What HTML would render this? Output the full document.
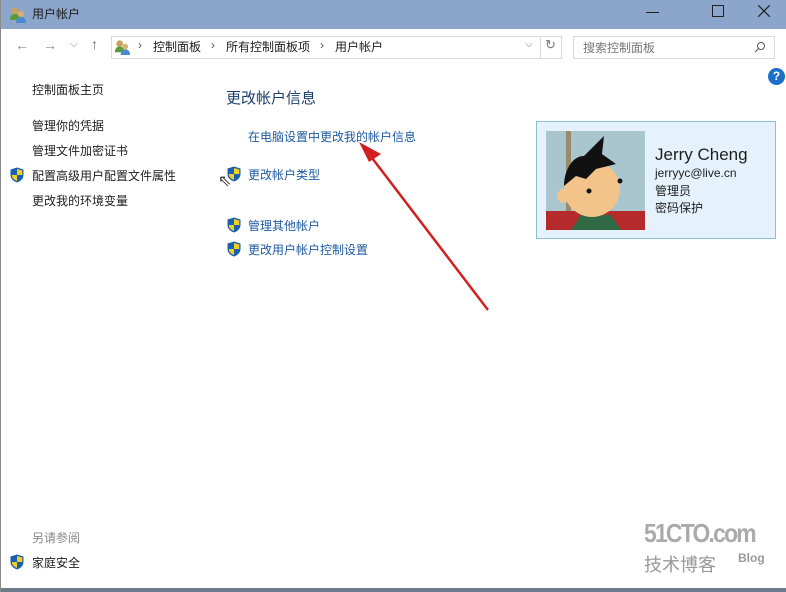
<!DOCTYPE html>
<html><head><meta charset="utf-8">
<style>
*{margin:0;padding:0;box-sizing:border-box}
body{width:786px;height:592px;overflow:hidden;background:#fff;font-family:"Liberation Sans","Noto Sans CJK SC",sans-serif;font-size:12px;color:#1e1e1e;position:relative;border-left:1px solid #8a8a8a}
.a{position:absolute;white-space:nowrap}
.link{color:#1e5aa0}
.sh{position:absolute;width:14px;height:16px}
</style></head><body>
<div class="a" style="left:0;top:0;width:786px;height:29px;background:#8ca6cb"></div>
<svg class="a" style="left:8px;top:6px" width="18" height="18" viewBox="0 0 18 18"><circle cx="6" cy="5" r="3.5" fill="#c9a25a"/><path d="M1 14c0-4 2-6 5-6s5 2 5 6z" fill="#5a9a3a"/><circle cx="12" cy="8" r="3" fill="#d8b070"/><path d="M7 17c0-4 2-6 5-6s5 2 5 6z" fill="#4a8ad0"/></svg>
<div class="a" style="left:31px;top:5px;font-size:12px;color:#1a1a1a">用户帐户</div>
<div class="a" style="left:645px;top:12px;width:13px;height:1px;background:#222"></div>
<div class="a" style="left:711px;top:5px;width:12px;height:12px;border:1px solid #222"></div>
<svg class="a" style="left:757px;top:5px" width="12" height="12" viewBox="0 0 12 12"><path d="M0 0L12 12M12 0L0 12" stroke="#222" stroke-width="1.2"/></svg>

<div class="a" style="left:14px;top:37px;font-size:14px;color:#888">←</div>
<div class="a" style="left:42px;top:37px;font-size:14px;color:#888">→</div>
<div class="a" style="left:69px;top:39px;font-size:10px;color:#888">⌵</div>
<div class="a" style="left:90px;top:36px;font-size:14px;color:#666">↑</div>
<div class="a" style="left:110px;top:36px;width:451px;height:23px;border:1px solid #d9d9d9"></div>
<div class="a" style="left:539px;top:36px;width:1px;height:23px;background:#d9d9d9"></div>
<svg class="a" style="left:113px;top:39px" width="17" height="17" viewBox="0 0 18 18"><circle cx="6" cy="5" r="3.5" fill="#c9a25a"/><path d="M1 14c0-4 2-6 5-6s5 2 5 6z" fill="#5a9a3a"/><circle cx="12" cy="8" r="3" fill="#d8b070"/><path d="M7 17c0-4 2-6 5-6s5 2 5 6z" fill="#4a8ad0"/></svg>
<div class="a" style="left:137px;top:38px;color:#555">›</div>
<div class="a" style="left:152px;top:38px">控制面板</div>
<div class="a" style="left:210px;top:38px;color:#555">›</div>
<div class="a" style="left:225px;top:38px">所有控制面板项</div>
<div class="a" style="left:319px;top:38px;color:#555">›</div>
<div class="a" style="left:334px;top:38px">用户帐户</div>
<div class="a" style="left:524px;top:39px;font-size:10px;color:#777">⌵</div>
<div class="a" style="left:544px;top:37px;font-size:13px;color:#777">↻</div>
<div class="a" style="left:572px;top:36px;width:202px;height:23px;border:1px solid #d9d9d9"></div>
<div class="a" style="left:582px;top:39px;color:#777">搜索控制面板</div>
<svg class="a" style="left:753px;top:41px" width="12" height="12" viewBox="0 0 12 12"><circle cx="7" cy="5" r="3.5" fill="none" stroke="#555"/><path d="M4.5 7.5L1 11" stroke="#555"/></svg>
<div class="a" style="left:767px;top:68px;width:17px;height:17px;border-radius:50%;background:#1c70c8;color:#fff;font-weight:bold;font-size:12px;text-align:center;line-height:17px">?</div>

<div class="a" style="left:31px;top:81px">控制面板主页</div>
<div class="a" style="left:31px;top:117px">管理你的凭据</div>
<div class="a" style="left:31px;top:142px">管理文件加密证书</div>
<div class="a" style="left:31px;top:167px">配置高级用户配置文件属性</div>
<div class="a" style="left:31px;top:192px">更改我的环境变量</div>
<div class="a" style="left:31px;top:529px;color:#888">另请参阅</div>
<div class="a" style="left:31px;top:554px">家庭安全</div>

<div class="a" style="left:225px;top:87px;font-size:15px;color:#1a3f6a">更改帐户信息</div>
<div class="a link" style="left:247px;top:128px">在电脑设置中更改我的帐户信息</div>
<div class="a link" style="left:247px;top:166px">更改帐户类型</div>
<div class="a link" style="left:247px;top:217px">管理其他帐户</div>
<div class="a link" style="left:247px;top:241px">更改用户帐户控制设置</div>

<svg width="0" height="0" style="position:absolute"><defs><g id="s"><path d="M7 0.5L13.5 2.5V8C13.5 12 10 14.5 7 15.5 4 14.5 0.5 12 0.5 8V2.5Z" fill="#1a5fb0"/><path d="M7 2V8H12.3V3.5L7 2Z" fill="#f0d020"/><path d="M7 8V14C4.5 13 1.8 11 1.8 8Z" fill="#f0d020"/></g></defs></svg>
<svg class="sh" style="left:9px;top:167px" viewBox="0 0 14 16"><use href="#s"/></svg>
<svg class="sh" style="left:226px;top:166px" viewBox="0 0 14 16"><use href="#s"/></svg>
<svg class="sh" style="left:226px;top:217px" viewBox="0 0 14 16"><use href="#s"/></svg>
<svg class="sh" style="left:226px;top:241px" viewBox="0 0 14 16"><use href="#s"/></svg>
<svg class="sh" style="left:9px;top:554px" viewBox="0 0 14 16"><use href="#s"/></svg>

<div class="a" style="left:535px;top:121px;width:240px;height:118px;background:#e5f2fb;border:1px solid #8cc0d8"></div>
<svg class="a" style="left:545px;top:131px" width="99" height="99" viewBox="0 0 99 99"><rect width="99" height="99" fill="#a9c6cf"/><rect x="20" width="5" height="80" fill="#9a8c6a"/><rect y="80" width="99" height="19" fill="#b52a2a"/><path d="M25 99 35 84h30l10 15z" fill="#2f6a45"/><circle cx="46" cy="58" r="28" fill="#f2c48a"/><circle cx="18" cy="65" r="7" fill="#f2c48a"/><path d="M18 55c0-15 8-30 20-30l20-20-2 18 14 10-20 5-10 10-10-3z" fill="#111"/><circle cx="43" cy="60" r="2.5" fill="#111"/><circle cx="74" cy="50" r="2.5" fill="#111"/></svg>
<div class="a" style="left:654px;top:145px;font-size:17px">Jerry Cheng</div>
<div class="a" style="left:654px;top:166px">jerryyc@live.cn</div>
<div class="a" style="left:654px;top:182px">管理员</div>
<div class="a" style="left:654px;top:199px">密码保护</div>

<svg class="a" style="left:350px;top:140px" width="145" height="175" viewBox="0 0 145 175"><path d="M137 170L18 14" stroke="#d02020" stroke-width="2.5"/><path d="M8 2L30 14 18 22z" fill="#d02020"/></svg>
<div class="a" style="left:217px;top:171px;font-size:16px;color:#333">⇖</div>

<div class="a" style="left:643px;top:518px;font-size:26px;font-weight:bold;color:#aaa;letter-spacing:-2px;transform:scaleX(0.88);transform-origin:left">51CTO.com</div>
<div class="a" style="left:643px;top:551px;font-size:18px;color:#999">技术博客</div>
<div class="a" style="left:737px;top:551px;font-size:12px;font-weight:bold;color:#999">Blog</div>
<div class="a" style="left:0;top:588px;width:786px;height:4px;background:#6c7c8c"></div>
</body></html>
